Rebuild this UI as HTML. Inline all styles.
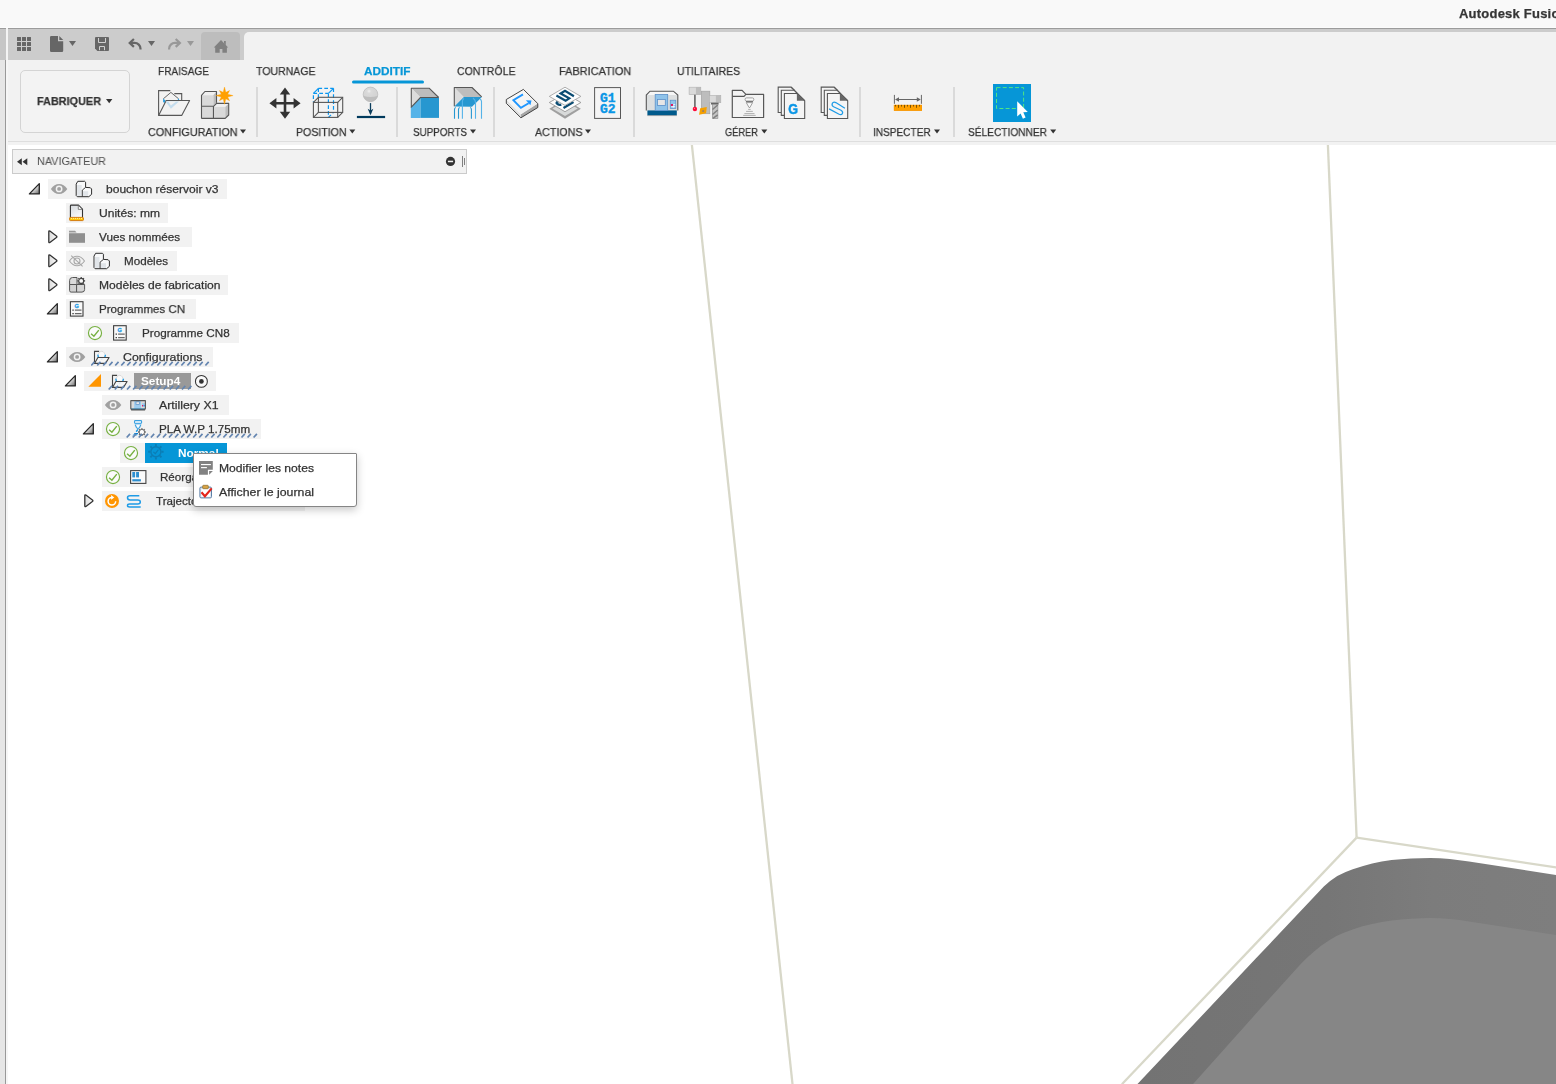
<!DOCTYPE html>
<html lang="fr"><head><meta charset="utf-8"><title>Fusion</title><style>
html,body{margin:0;padding:0}
html{overflow:hidden;width:1556px;height:1084px}
body{width:1556px;height:1084px;position:relative;overflow:hidden;background:#fff;font-family:"Liberation Sans",sans-serif;}
.a{position:absolute}
.t{position:absolute;white-space:nowrap;line-height:20px;height:20px;transform-origin:0 50%;will-change:transform;-webkit-text-stroke:0.25px currentColor;}
</style></head>
<body>
<!-- bars -->
<div class="a" style="left:0px;top:0px;width:1556px;height:27px;background:#f9f9f9;"></div>
<div class="a" style="left:0px;top:27px;width:1556px;height:1px;background:#fcfcfc;"></div>
<div class="a" style="left:0px;top:28px;width:1556px;height:1px;background:#9c9c9c;"></div>
<div class="a" style="left:0px;top:29px;width:1556px;height:31px;background:#cccccc;"></div>
<div class="a" style="left:0px;top:29px;width:6px;height:31px;background:#c6c6c6;"></div>
<div class="a" style="left:6px;top:28px;width:2px;height:32px;background:#f4f4f4;"></div>
<div class="a" style="left:0px;top:60px;width:1556px;height:85px;background:#f2f2f2;"></div>
<div class="a" style="left:8px;top:141px;width:1548px;height:1px;background:#dedede;"></div>
<div class="a" style="left:0px;top:60px;width:5px;height:1024px;background:#e6e6e6;"></div>
<div class="a" style="left:5px;top:60px;width:1px;height:1024px;background:#999999;"></div>
<div class="a" style="left:6px;top:60px;width:2px;height:1024px;background:#f6f6f6;"></div>
<span class="t" style="left:1459px;top:3.5px;font-size:13px;font-weight:700;color:#353535;transform:scaleX(1.0000);letter-spacing:0.22px;">Autodesk Fusion 360</span>
<svg class="a" style="left:17px;top:37px;" width="14" height="14" viewBox="0 0 14 14"><rect x="0" y="0" width="4" height="4" rx="0.35" fill="#666"/><rect x="5" y="0" width="4" height="4" rx="0.35" fill="#666"/><rect x="10" y="0" width="4" height="4" rx="0.35" fill="#666"/><rect x="0" y="5" width="4" height="4" rx="0.35" fill="#666"/><rect x="5" y="5" width="4" height="4" rx="0.35" fill="#666"/><rect x="10" y="5" width="4" height="4" rx="0.35" fill="#666"/><rect x="0" y="10" width="4" height="4" rx="0.35" fill="#666"/><rect x="5" y="10" width="4" height="4" rx="0.35" fill="#666"/><rect x="10" y="10" width="4" height="4" rx="0.35" fill="#666"/></svg>
<svg class="a" style="left:50px;top:36px;" width="14" height="16" viewBox="0 0 14 16"><path d="M1.2 0 H8 V5.2 H13.2 V14.8 Q13.2 16 12 16 H1.2 Q0 16 0 14.8 V1.2 Q0 0 1.2 0Z M9.3 0 L13.2 3.9 H9.3Z" fill="#666"/></svg>
<svg class="a" style="left:69px;top:41px;" width="8" height="6" viewBox="0 0 8 6"><path d="M0 0H7L3.5 5Z" fill="#666"/></svg>
<svg class="a" style="left:95px;top:37px;" width="14" height="14" viewBox="0 0 14 14"><path d="M1 0H13Q14 0 14 1V13Q14 14 13 14H2.4L0 11.6V1Q0 0 1 0Z" fill="#666"/><path d="M3.5 1 V5.5 H10.5 V1" fill="none" stroke="#d0d0d0" stroke-width="1"/><path d="M4.5 13.2 V9.5 H9.5 V13.2" fill="none" stroke="#d0d0d0" stroke-width="1"/></svg>
<svg class="a" style="left:128px;top:37px;" width="15" height="14" viewBox="0 0 15 14"><path d="M5.9 2 L1.7 5.9 L5.9 9.9" fill="none" stroke="#666" stroke-width="2.2" stroke-linejoin="miter"/><path d="M2.4 5.9 H6.6 A5.9 5.9 0 0 1 12.5 11.8 V12.6" fill="none" stroke="#666" stroke-width="2.2"/></svg>
<svg class="a" style="left:148px;top:41px;" width="8" height="6" viewBox="0 0 8 6"><path d="M0 0H7L3.5 5Z" fill="#666"/></svg>
<svg class="a" style="left:167px;top:37px;" width="15" height="14" viewBox="0 0 15 14"><g transform="translate(14.6 0) scale(-1 1)"><path d="M5.9 2 L1.7 5.9 L5.9 9.9" fill="none" stroke="#989898" stroke-width="2.2" stroke-linejoin="miter"/><path d="M2.4 5.9 H6.6 A5.9 5.9 0 0 1 12.5 11.8 V12.6" fill="none" stroke="#989898" stroke-width="2.2"/></g></svg>
<svg class="a" style="left:187px;top:41px;" width="8" height="6" viewBox="0 0 8 6"><path d="M0 0H7L3.5 5Z" fill="#999"/></svg>
<div class="a" style="left:201px;top:32px;width:39px;height:28px;background:#bdbdbd;border-radius:4px 4px 0 0;"></div>
<svg class="a" style="left:213px;top:39px;" width="16" height="15" viewBox="0 0 16 15"><path d="M8 0.9 L15.2 8.4 H13.9 V13.8 H9.4 V9.9 H6.7 V13.8 H2.2 V8.4 H0.8Z M11 2 H12.8 V6 L11 4.1Z" fill="#808080"/></svg>
<div class="a" style="left:244px;top:32px;width:1312px;height:28px;background:#f2f2f2;border-radius:5px 0 0 0;"></div>
<!-- ribbon -->
<div class="a" style="left:20px;top:70px;width:108px;height:61px;border:1px solid #d4d4d4;border-radius:5px;background:#f3f3f3"></div>
<span class="t" style="left:36.6px;top:91.3px;font-size:11.7px;font-weight:700;color:#333;transform:scaleX(0.9296);">FABRIQUER</span>
<svg class="a" style="left:106px;top:99px;" width="7" height="5" viewBox="0 0 7 5"><path d="M0 0H6.4L3.2 4.2Z" fill="#333"/></svg>
<span class="t" style="left:157.6px;top:61.4px;font-size:11.7px;font-weight:400;color:#333;transform:scaleX(0.8628);-webkit-text-stroke:0.25px #333;">FRAISAGE</span>
<span class="t" style="left:256px;top:61.4px;font-size:11.7px;font-weight:400;color:#333;transform:scaleX(0.9011);-webkit-text-stroke:0.25px #333;">TOURNAGE</span>
<span class="t" style="left:364px;top:61.4px;font-size:11.7px;font-weight:700;color:#0696d7;transform:scaleX(1.0088);">ADDITIF</span>
<span class="t" style="left:457px;top:61.4px;font-size:11.7px;font-weight:400;color:#333;transform:scaleX(0.9006);-webkit-text-stroke:0.25px #333;">CONTRÔLE</span>
<span class="t" style="left:559.4px;top:61.4px;font-size:11.7px;font-weight:400;color:#333;transform:scaleX(0.9382);-webkit-text-stroke:0.25px #333;">FABRICATION</span>
<span class="t" style="left:677.3px;top:61.4px;font-size:11.7px;font-weight:400;color:#333;transform:scaleX(0.9039);-webkit-text-stroke:0.25px #333;">UTILITAIRES</span>
<span class="t" style="left:147.5px;top:122.3px;font-size:11.7px;font-weight:400;color:#333;transform:scaleX(0.9209);-webkit-text-stroke:0.25px #333;">CONFIGURATION</span>
<svg class="a" style="left:240px;top:129px;" width="7" height="6" viewBox="0 -0.6 7 6"><path d="M0 0H6L3 4Z" fill="#333"/></svg>
<span class="t" style="left:296.2px;top:122.3px;font-size:11.7px;font-weight:400;color:#333;transform:scaleX(0.9041);-webkit-text-stroke:0.25px #333;">POSITION</span>
<svg class="a" style="left:349px;top:129px;" width="8" height="6" viewBox="-0.3 -0.6 8 6"><path d="M0 0H6L3 4Z" fill="#333"/></svg>
<span class="t" style="left:413.3px;top:122.3px;font-size:11.7px;font-weight:400;color:#333;transform:scaleX(0.8425);-webkit-text-stroke:0.25px #333;">SUPPORTS</span>
<svg class="a" style="left:470px;top:129px;" width="7" height="6" viewBox="0 -0.6 7 6"><path d="M0 0H6L3 4Z" fill="#333"/></svg>
<span class="t" style="left:534.8px;top:122.3px;font-size:11.7px;font-weight:400;color:#333;transform:scaleX(0.9143);-webkit-text-stroke:0.25px #333;">ACTIONS</span>
<svg class="a" style="left:585px;top:129px;" width="7" height="6" viewBox="0 -0.6 7 6"><path d="M0 0H6L3 4Z" fill="#333"/></svg>
<span class="t" style="left:725px;top:122.3px;font-size:11.7px;font-weight:400;color:#333;transform:scaleX(0.7937);-webkit-text-stroke:0.25px #333;">GÉRER</span>
<svg class="a" style="left:761px;top:129px;" width="8" height="6" viewBox="-0.3 -0.6 8 6"><path d="M0 0H6L3 4Z" fill="#333"/></svg>
<span class="t" style="left:873.2px;top:122.3px;font-size:11.7px;font-weight:400;color:#333;transform:scaleX(0.8611);-webkit-text-stroke:0.25px #333;">INSPECTER</span>
<svg class="a" style="left:934px;top:129px;" width="7" height="6" viewBox="0 -0.6 7 6"><path d="M0 0H6L3 4Z" fill="#333"/></svg>
<span class="t" style="left:968.3px;top:122.3px;font-size:11.7px;font-weight:400;color:#333;transform:scaleX(0.8689);-webkit-text-stroke:0.25px #333;">SÉLECTIONNER</span>
<svg class="a" style="left:1050px;top:129px;" width="8" height="6" viewBox="-0.2 -0.6 8 6"><path d="M0 0H6L3 4Z" fill="#333"/></svg>
<div class="a" style="left:256.3px;top:86.5px;width:1.4px;height:50.8px;background:#dadada;"></div>
<div class="a" style="left:396.3px;top:86.5px;width:1.4px;height:50.8px;background:#dadada;"></div>
<div class="a" style="left:493.3px;top:86.5px;width:1.4px;height:50.8px;background:#dadada;"></div>
<div class="a" style="left:633.3px;top:86.5px;width:1.4px;height:50.8px;background:#dadada;"></div>
<div class="a" style="left:859.4px;top:86.5px;width:1.4px;height:50.8px;background:#dadada;"></div>
<div class="a" style="left:953.4px;top:86.5px;width:1.4px;height:50.8px;background:#dadada;"></div>
<svg class="a" style="left:0;top:60px" width="1100" height="82" viewBox="0 60 1100 82"><rect x="352" y="80.5" width="72" height="3" rx="1.5" fill="#0696d7"/><path d="M158.6 115.4 V90.6 H170.3 M174.3 93.6 H181.7 V100.5" fill="none" stroke="#575757" stroke-width="1.1"/><path d="M163.3 98.8 L170.9 92.4 L178.6 98.8" fill="none" stroke="#575757" stroke-width="0.9"/><path d="M163.1 98.6 L165.6 100.4 L164.6 103 L163.1 102Z M177.9 98.6 L179.1 98.9 V100.3 H177.9Z" fill="#2d9fe0"/><path d="M158.6 115.4 L166.2 100.5 H189.6 L181.7 115.4 Z" fill="#f2f2f2" stroke="#575757" stroke-width="1.1" stroke-linejoin="round"/><path d="M165.6 101.4 H179 L170.9 108.8Z" fill="#c4ddee"/><path d="M168.4 101.4 H176.2 L170.9 105.4Z" fill="#f2f2f2"/><path d="M201.5 95.3 L204.9 91.5 H216.5 L213.3 95.3Z" fill="#f0f0f0"/><path d="M213.3 95.3 L216.5 91.5 V102.8 L213.3 106.3Z" fill="#bdbdbd"/><rect x="201.5" y="95.3" width="11.8" height="11" fill="#d9d9d9"/><rect x="201.5" y="106.3" width="11.8" height="12.1" fill="#d9d9d9"/><path d="M213.6 106.9 L217.1 103.4 H228.7 L225.2 106.9Z" fill="#f0f0f0"/><path d="M225.2 106.9 L228.7 103.4 V115 L225.2 118.4Z" fill="#bdbdbd"/><rect x="213.6" y="106.9" width="11.6" height="11.5" fill="#d9d9d9"/><path d="M201.5 118.4 V95.3 L204.9 91.5 H216.5 V102.8 M201.5 106.3 H213.3 M213.45 106.5 V118.4 M213.3 106.6 L216.8 103.1 M216.8 103.4 H228.7 V115 L225.2 118.4 H201.5" fill="none" stroke="#575757" stroke-width="1.1" stroke-linejoin="round"/><polygon points="224.50,87.00 225.84,92.37 229.59,90.51 227.73,94.26 233.10,95.60 227.73,96.94 229.59,100.69 225.84,98.83 224.50,104.20 223.16,98.83 219.41,100.69 221.27,96.94 215.90,95.60 221.27,94.26 219.41,90.51 223.16,92.37" fill="#ffa000" stroke="#ffa000" stroke-width="0.35" stroke-linejoin="round"/><path d="M285.0 87.60000000000001 L290.2 94.60000000000001 H286.3 V101.9 H293.6 V98.0 L300.6 103.2 L293.6 108.4 V104.5 H286.3 V111.8 H290.2 L285.0 118.8 L279.8 111.8 H283.7 V104.5 H276.4 V108.4 L269.4 103.2 L276.4 98.0 V101.9 H283.7 V94.60000000000001 H279.8Z" fill="#333"/><g fill="none" stroke="#0a96f0" stroke-width="1.2" stroke-dasharray="3.7 2.2"><path d="M318.4 88.4 H333.5"/><path d="M313.4 93.4 H328.4"/><path d="M313.4 93.4 L318.4 88.4" stroke-dasharray="none"/><path d="M328.4 93.4 L333.5 88.4" stroke-dasharray="none"/><path d="M313.4 95.2 V101.8"/><path d="M318.4 88.4 V97"/><path d="M328.4 93.4 V117.4"/><path d="M333.5 88.4 V112.4"/><path d="M328.4 117.4 L333.5 112.4"/></g><rect x="313.4" y="102.4" width="24.3" height="15" fill="none" stroke="#575757" stroke-width="1.1"/><rect x="318.4" y="97.3" width="24.3" height="15.1" fill="none" stroke="#575757" stroke-width="1.1"/><path d="M313.4 102.4 L318.4 97.3 M337.7 102.4 L342.7 97.3 M313.4 117.4 L318.4 112.4 M337.7 117.4 L342.7 112.4" stroke="#575757" stroke-width="1.1"/><defs><radialGradient id="ball" cx="0.4" cy="0.28" r="0.5"><stop offset="0" stop-color="#f0f0f0"/><stop offset="0.3" stop-color="#dadada"/><stop offset="1" stop-color="#d4d4d4"/></radialGradient><clipPath id="ballc"><circle cx="370.5" cy="94.4" r="7.3"/></clipPath></defs><circle cx="370.5" cy="94.4" r="7.3" fill="url(#ball)"/><path d="M362 95.5 Q370.5 98.5 379 95.5 V103 H362Z" fill="#bebebe" clip-path="url(#ballc)"/><circle cx="370.5" cy="94.4" r="7.3" fill="none" stroke="#b8b8b8" stroke-width="0.7"/><path d="M370.5 103.1 V113.5" stroke="#0b3d5c" stroke-width="1.3"/><path d="M367.7 108.7 L370.5 115.2 L373.3 108.7 L370.5 110.6Z" fill="#0b3d5c"/><rect x="356.9" y="115.9" width="28.2" height="2.2" fill="#003a5d"/><path d="M411.3 88.2 H429.1 L438.7 97.5 H420.5Z" fill="#bdbdbd"/><path d="M411.3 88.2 L420.5 97.5 L411.3 107.2Z" fill="#dcdcdc"/><path d="M410.8 107.6 L420.5 97.6 V117.9 H410.8Z" fill="#55b3e8"/><rect x="420.5" y="97.6" width="18.5" height="20.3" fill="#2797d0"/><path d="M438.7 97.5 L429.1 88.2 H411.3 V107.2 L420.5 97.5 H438.7" fill="none" stroke="#575757" stroke-width="1.1" stroke-linejoin="round"/><path d="M454.3 87.5 H472 L481.7 96.9 H463.6Z" fill="#bdbdbd"/><path d="M454.3 87.5 L463.6 96.9 L454.3 106.3Z" fill="#dcdcdc"/><path d="M454.3 106.5 L463.8 96.9 H481.9 L472 106.8Z" fill="#2797d0"/><path d="M481.7 96.9 L472 87.5 H454.3 V106.3" fill="none" stroke="#575757" stroke-width="1.1" stroke-linejoin="round"/><path d="M454.5 118.8 V109.6 Q454.5 108.2 455.6 107.4 M458.5 118.8 V109.6 Q458.5 108.2 459.6 107.4 M471.4 118.8 V109.6 Q471.4 108.2 470.3 107.4" fill="none" stroke="#2797d0" stroke-width="1.1"/><path d="M462.4 118.8 V101.5 Q462.4 99.6 464 98.4 M475.5 118.8 V102.5 Q475.5 100 473 98 M481.5 118.8 V101.5 Q481.5 100 480 99" fill="none" stroke="#55b3e8" stroke-width="1.1"/><defs><linearGradient id="slab" x1="0" y1="0" x2="1" y2="1"><stop offset="0" stop-color="#fcfcfc"/><stop offset="1" stop-color="#ececec"/></linearGradient></defs><path d="M506.3 99.5 V103.3 L520.9 117.8 L537.8 107.5 V103.6 L520.9 114.2Z" fill="#e2e2e2"/><path d="M520.9 114.2 V117.8 L537.8 107.5 V103.6Z" fill="#a6a6a6"/><path d="M506.3 99.5 L523.4 89.4 L537.8 103.6 L520.9 114.2Z" fill="url(#slab)"/><path d="M506.3 99.5 L523.4 89.4 L537.8 103.6 V107.5 L520.9 117.8 L506.3 103.3Z" fill="none" stroke="#333" stroke-width="0.9" stroke-linejoin="round"/><path d="M523 94.4 L513.4 100.2 L520.9 107.9 L528.6 103.2" fill="none" stroke="#1e96ff" stroke-width="1.9"/><path d="M525.9 100.3 L531.5 100.4 L530.4 105.2Z" fill="#1e96ff"/><path d="M549.3 108.7 L565 99.5 L580.9 108.7 L565 118.8Z" fill="#a0a0a0"/><path d="M552.3 108.6 L565 101.4 L577.8 108.6 L565 115.9Z" fill="#d8dada"/><path d="M549.3 102.5 L565 93.5 L580.9 102.5 L565 111.7Z" fill="#fdfdfd" stroke="#8c8c8c" stroke-width="0.8"/><path d="M558.6 101.3 Q555 102.6 557.5 104 Q559.3 105.2 561.3 104.6 M573.5 102 L563.5 108" fill="none" stroke="#0b4c73" stroke-width="2.2"/><path d="M549.3 96.4 L565 87.2 L580.9 96.4 L565 105.4Z" fill="#fdfdfd" stroke="#9a9a9a" stroke-width="0.8"/><path d="M573.9 96.2 L565 90.8 L560.6 93.5 L569.3 98.3 L565.6 100.8 L556.4 95.5" fill="none" stroke="#0b4c73" stroke-width="2.2"/><rect x="594.6" y="87.6" width="25.9" height="30.8" fill="#f5f5f5" stroke="#575757" stroke-width="1"/><text font-family="Liberation Mono" font-weight="700" font-size="13" fill="#0a96e6" stroke="#0a96e6" stroke-width="0.35"><tspan x="599.9" y="102.1">G1</tspan><tspan x="599.9" y="113.1">G2</tspan></text><path d="M646.3 110.4 V95 L650 91.2 H673.4 L677.8 95 V110.4Z" fill="#dcdfe0"/><path d="M646.8 95 L650 91.6 H673.4 L677.4 95Z" fill="#f6f6f6"/><rect x="647.4" y="110.4" width="29.4" height="5" fill="#005a8c"/><path d="M646.3 110.4 V95 L650 91.2 H673.4 L677.8 95 V110.4" fill="none" stroke="#575757" stroke-width="1.1"/><path d="M647.4 115.6 H676.8" stroke="#8a8a8a" stroke-width="0.6"/><rect x="655.2" y="94.4" width="12.5" height="16.2" fill="#8fc3ea" stroke="#5a8fc8" stroke-width="0.8"/><rect x="657.5" y="99.4" width="7.8" height="6" fill="#e6e6e6" stroke="#5a8fc8" stroke-width="0.8"/><rect x="670.2" y="100.2" width="5.6" height="8.4" fill="#8fc3ea" stroke="#5a8fc8" stroke-width="0.7"/><rect x="670.9" y="104.1" width="2.1" height="1.8" fill="#e8004d"/><path d="M673.2 104.6 H675.2 M671.2 106.7 H675.2 M673.3 105.6 V107.6" stroke="#fff" stroke-width="0.8"/><rect x="701.4" y="91.2" width="8.4" height="22.5" fill="#bdbdbd" stroke="#a2a2a2" stroke-width="0.7"/><rect x="689.1" y="87.2" width="6.7" height="7.5" fill="#dadada"/><rect x="695.8" y="87.2" width="5" height="7.5" fill="#bdbdbd"/><rect x="689.1" y="87.2" width="11.7" height="7.5" fill="none" stroke="#b0b0b0" stroke-width="0.6"/><path d="M694.9 94.7 V107" stroke="#6e6e6e" stroke-width="1.7"/><circle cx="694.9" cy="109" r="2.2" fill="#ff0a38"/><circle cx="694.5" cy="108.3" r="0.6" fill="#ff8fa3"/><rect x="709.3" y="95.4" width="6.4" height="7.3" fill="#dadada"/><rect x="715.7" y="95.4" width="5.1" height="7.3" fill="#bdbdbd"/><rect x="709.3" y="95.4" width="11.5" height="7.3" fill="none" stroke="#b0b0b0" stroke-width="0.6"/><rect x="711" y="102.7" width="7.6" height="1.8" fill="#666"/><rect x="712.3" y="104.5" width="5.6" height="14.1" fill="#c4c4c4" stroke="#8a8a8a" stroke-width="0.6"/><path d="M712.5 109.5 L717.7 105 M712.5 114.5 L717.7 110 M713 118.3 L717.7 114.8" stroke="#808080" stroke-width="1.5"/><path d="M700.2 108.3 L706.8 107.1 L706 113.3 L699.1 114.7Z" fill="#f5a000"/><rect x="702.2" y="110.1" width="1.9" height="1.9" fill="#a08060"/><path d="M732.3 117.5 V90.4 H742.1 L745.9 94.4 H763.6 V117.5Z" fill="#f3f3f3" stroke="#575757" stroke-width="1.2" stroke-linejoin="round"/><path d="M732.3 96.4 H744 L745.9 94.4" fill="none" stroke="#575757" stroke-width="1.1"/><rect x="745.1" y="97.9" width="8.7" height="3.1" rx="1.4" fill="#fafafa" stroke="#8a8a8a" stroke-width="0.8"/><path d="M746 101.7 H753" stroke="#6a6a6a" stroke-width="1.1"/><path d="M746.3 102.6 H752.6 L749.9 107.5 H749 Z" fill="#fafafa" stroke="#8a8a8a" stroke-width="0.8"/><path d="M748.2 109.4 H750.7 M746.1 111.4 H752.8 M744.4 113.6 H754.5 M743.2 115.4 H755.7" stroke="#a6a6a6" stroke-width="0.9"/><g transform="translate(0 0)"><path d="M781.3 112.5 H778.2 V87.1 H791.1 L794.5 90.4" fill="#f5f5f5" stroke="#575757" stroke-width="1.1"/><path d="M781.3 115.4 V90.2 H794.2 L797.5 93.6 V115.4Z" fill="#f5f5f5" stroke="#575757" stroke-width="1.1"/><path d="M784.4 118.5 V93.5 H796.9 L804.7 100.7 V118.5Z" fill="#f5f5f5" stroke="#575757" stroke-width="1.1"/><path d="M791.1 87.1 L804.7 100.7" stroke="#575757" stroke-width="1.1"/><path d="M796.9 93.5 L804.7 100.7 H796.9Z" fill="#666"/><text transform="translate(788.3 113.7) scale(0.84 1)" font-family="Liberation Sans" font-weight="700" font-size="15" fill="#0a96e6" stroke="#0a96e6" stroke-width="0.5">G</text></g><g transform="translate(43 0)"><path d="M781.3 112.5 H778.2 V87.1 H791.1 L794.5 90.4" fill="#f5f5f5" stroke="#575757" stroke-width="1.1"/><path d="M781.3 115.4 V90.2 H794.2 L797.5 93.6 V115.4Z" fill="#f5f5f5" stroke="#575757" stroke-width="1.1"/><path d="M784.4 118.5 V93.5 H796.9 L804.7 100.7 V118.5Z" fill="#f5f5f5" stroke="#575757" stroke-width="1.1"/><path d="M791.1 87.1 L804.7 100.7" stroke="#575757" stroke-width="1.1"/><path d="M796.9 93.5 L804.7 100.7 H796.9Z" fill="#666"/><path d="M801.9 108.2 L792.8 102.6 Q790.4 101.4 789.3 103.4 Q788.4 105.4 790.6 106.8 L798 110.3 Q800.4 111.8 799.4 113.6 Q798.2 115.4 795.6 114 L786.1 108.9" fill="none" stroke="#1e9be6" stroke-width="1.2"/></g><path d="M894.4 94.9 V103.8 M921.4 94.9 V103.8" stroke="#666" stroke-width="1"/><path d="M896 99.5 H920" stroke="#666" stroke-width="1"/><path d="M895 99.5 L899 97.2 V101.8Z M920.8 99.5 L916.8 97.2 V101.8Z" fill="#666"/><rect x="893.9" y="104.9" width="28.1" height="5.9" fill="#ffa000"/><rect x="894.2" y="105.2" width="27.5" height="5.3" fill="none" stroke="#f59300" stroke-width="0.6"/><path d="M895.5 104.9 V106.5 M898.5 104.9 V107.8 M901.5 104.9 V106.5 M904.5 104.9 V107.8 M907.5 104.9 V106.5 M910.5 104.9 V107.8 M913.5 104.9 V106.5 M916.5 104.9 V107.8 M919.5 104.9 V106.5" stroke="#7a5200" stroke-width="1"/><rect x="993" y="84" width="38" height="38" fill="#0696d7"/><rect x="996.5" y="87.6" width="27.1" height="20.9" fill="none" stroke="#4fe684" stroke-width="1" stroke-dasharray="4 2.2"/><path d="M1017.2 101.3 V116.5 L1020.6 113.4 L1022.9 118.8 L1025.6 117.6 L1023.3 112.3 L1027.8 111.9Z" fill="#fff"/></svg>
<!-- canvas -->
<div class="a" style="left:8px;top:145px;width:1548px;height:939px;background:#ffffff;"></div>
<svg class="a" style="left:0;top:0" width="1556" height="1084" viewBox="0 0 1556 1084"><defs><linearGradient id="wall" x1="1140" y1="0" x2="1556" y2="0" gradientUnits="userSpaceOnUse"><stop offset="0" stop-color="#737373"/><stop offset="0.45" stop-color="#767676"/><stop offset="0.7" stop-color="#7c7c7c"/><stop offset="1" stop-color="#7e7e7e"/></linearGradient></defs><g fill="none" stroke="#d8d8c9" stroke-width="2.3"><path d="M691.9 145 L792.5 1084"/><path d="M1327.9 145 L1356.6 837.6"/><path d="M1356.6 837.6 L1121.9 1084.2"/><path d="M1356.6 837.6 L1557 867.5"/></g><path d="M1137 1084.5 L1256 958.3 L1323.8 886.6 Q1330 880.5 1337.3 876 Q1344.5 872 1352.8 869.2 Q1362 866 1372.2 863.4 Q1381.5 861.3 1391.6 860.1 Q1401 858.9 1411 858.4 Q1420.5 858 1430.3 858 Q1440 858.2 1449.7 858.9 Q1459.5 859.9 1469 861.5 L1557 875.1 V1085 Z" fill="url(#wall)"/><path d="M1192.2 1085 L1256 1013.6 L1299.6 965.2 Q1306.5 957.8 1314.1 951.5 Q1321 945.2 1329.6 939.9 Q1336 936 1343.2 933.1 Q1352.5 929.3 1362.5 926.3 Q1372 923.8 1381.9 922.1 Q1391.5 920.5 1401.3 919.6 Q1411 918.6 1420.6 918.2 Q1430.5 918 1440 918.2 Q1450 918.8 1459.4 919.9 L1557 935.2 V1085 Z" fill="#868686"/></svg>
<!-- navigator -->
<div class="a" style="left:12px;top:149px;width:453px;height:23px;border:1px solid #cbcbcb;background:#f2f2f2"></div>
<svg class="a" style="left:17px;top:158px;" width="11" height="8" viewBox="0 0 11 8"><path d="M4.8 0.3 V7.3 L0 3.8Z M10.3 0.3 V7.3 L5.5 3.8Z" fill="#333"/></svg>
<span class="t" style="left:36.5px;top:151.1px;font-size:11.3px;font-weight:400;color:#505050;transform:scaleX(0.9615);-webkit-text-stroke:0;">NAVIGATEUR</span>
<svg class="a" style="left:445px;top:156px;" width="11" height="11" viewBox="-0.5 -0.4 11 11"><circle cx="5" cy="5" r="4.6" fill="#333"/><rect x="2.4" y="4.3" width="5.2" height="1.5" fill="#f2f2f2"/></svg>
<div class="a" style="left:462px;top:156px;width:1px;height:11px;background:#808080;"></div>
<div class="a" style="left:464px;top:158.3px;width:1px;height:6.4px;background:#808080;"></div>
<svg class="a" style="left:27px;top:181px;" width="15" height="15" viewBox="-0.4 -0.6 15 15"><defs><linearGradient id="tg29189" x1="0.2" y1="0.2" x2="1" y2="1"><stop offset="0.3" stop-color="#eeeeee"/><stop offset="1" stop-color="#666666"/></linearGradient></defs><path d="M11.9 2 V12.3 H2Z" fill="url(#tg29189)" stroke="#262626" stroke-width="1.3" stroke-linejoin="round"/></svg>
<div class="a" style="left:48px;top:179px;width:179px;height:20px;background:#f2f2f2;"></div>
<svg class="a" style="left:50px;top:183px;" width="18" height="12" viewBox="-0.7 -0.7 18 12"><path d="M0.2 5.3 Q3.6 0.2 8.4 0.2 Q13.2 0.2 16.6 5.3 Q13.2 10.4 8.4 10.4 Q3.6 10.4 0.2 5.3Z" fill="#a0a0a0"/><circle cx="8.4" cy="5.2" r="3.4" fill="#f2f2f2"/><circle cx="8.4" cy="5.2" r="1.95" fill="#a0a0a0"/></svg>
<svg class="a" style="left:75px;top:180px;" width="18" height="18" viewBox="-0.7 -0.7 18 18"><path d="M2.1 0.6 H9 L9.9 1.5 V6.7 L14.6 7 L15.9 8.3 V13.6 L13.1 16 H1.6 L0.5 14.8 V3.4 Z" fill="#f8f9fa" stroke="#2e2e2e" stroke-width="1" stroke-linejoin="round"/><path d="M1.4 4.3 H6 V15.2 H1.4Z" fill="#e1e5e9"/><path d="M7.3 10.5 H12.5 V15.2 H7.3Z" fill="#e1e5e9"/><path d="M6.6 9.4 L9.8 6.8 M6.6 9.4 V15.8" fill="none" stroke="#2e2e2e" stroke-width="0.9"/></svg>
<span class="t" style="left:105.5px;top:179px;font-size:11.6px;font-weight:400;color:#333;transform:scaleX(1.0390);">bouchon réservoir v3</span>
<div class="a" style="left:66px;top:203px;width:102px;height:20px;background:#f2f2f2;"></div>
<svg class="a" style="left:69px;top:204px;" width="16" height="18" viewBox="0 -0.5 16 18"><defs><linearGradient id="pg" x1="0" y1="0" x2="0.6" y2="1"><stop offset="0" stop-color="#d6dade"/><stop offset="1" stop-color="#f8f8f8"/></linearGradient></defs><path d="M1.4 13 V1.5 Q1.4 0.6 2.3 0.6 H9.4 L13.5 4.7 V13" fill="url(#pg)" stroke="#333" stroke-width="1.1"/><path d="M9.3 0.8 V4.9 H13.3Z" fill="#fdfdfd" stroke="#555" stroke-width="0.7"/><rect x="0.6" y="12.9" width="13.8" height="3.2" rx="0.8" fill="#ffc400" stroke="#cf6f00" stroke-width="0.9"/><path d="M2.6 13.4 V14.6 M4.6 13.4 V14.6 M6.6 13.4 V14.6 M8.6 13.4 V14.6 M10.6 13.4 V14.6 M12.5 13.4 V14.6" stroke="#fff6d8" stroke-width="0.7"/></svg>
<span class="t" style="left:98.5px;top:203px;font-size:11.6px;font-weight:400;color:#333;transform:scaleX(1.0405);">Unités: mm</span>
<svg class="a" style="left:47px;top:229px;" width="13" height="16" viewBox="-0.1 -0.4 13 16"><defs><linearGradient id="tc237" x1="0" y1="0" x2="1" y2="0"><stop offset="0" stop-color="#dcdcdc"/><stop offset="1" stop-color="#fafafa"/></linearGradient></defs><path d="M1.7 2.2 Q1.7 1.1 2.8 1.7 L9.3 6.6 Q10.3 7.4 9.3 8.2 L2.8 13.1 Q1.7 13.7 1.7 12.6Z" fill="url(#tc237)" stroke="#333" stroke-width="1.3" stroke-linejoin="round"/></svg>
<div class="a" style="left:66px;top:227px;width:126px;height:20px;background:#f2f2f2;"></div>
<svg class="a" style="left:69px;top:230px;" width="16" height="13" viewBox="0 0 16 13"><path d="M0 0.8 H6 L7.6 2.4 H0Z" fill="#9a9a9a"/><rect x="0" y="3.2" width="16" height="9.6" fill="#8f8f8f"/></svg>
<span class="t" style="left:98.5px;top:227px;font-size:11.6px;font-weight:400;color:#333;transform:scaleX(1.0122);">Vues nommées</span>
<svg class="a" style="left:47px;top:253px;" width="13" height="16" viewBox="-0.1 -0.4 13 16"><defs><linearGradient id="tc261" x1="0" y1="0" x2="1" y2="0"><stop offset="0" stop-color="#dcdcdc"/><stop offset="1" stop-color="#fafafa"/></linearGradient></defs><path d="M1.7 2.2 Q1.7 1.1 2.8 1.7 L9.3 6.6 Q10.3 7.4 9.3 8.2 L2.8 13.1 Q1.7 13.7 1.7 12.6Z" fill="url(#tc261)" stroke="#333" stroke-width="1.3" stroke-linejoin="round"/></svg>
<div class="a" style="left:66px;top:251px;width:111px;height:20px;background:#f2f2f2;"></div>
<svg class="a" style="left:69px;top:255px;" width="16" height="12" viewBox="0 0 16 12"><path d="M0.5 6 Q3.8 1.3 8 1.3 Q12.2 1.3 15.5 6 Q12.2 10.7 8 10.7 Q3.8 10.7 0.5 6Z" fill="none" stroke="#a8a8a8" stroke-width="1.1"/><circle cx="8" cy="6" r="3" fill="none" stroke="#a8a8a8" stroke-width="1.1"/><path d="M2.2 0.6 L13.6 11.4" stroke="#a8a8a8" stroke-width="1.1"/></svg>
<svg class="a" style="left:93px;top:252px;" width="18" height="18" viewBox="-0.5 -0.7 18 18"><path d="M2.1 0.6 H9 L9.9 1.5 V6.7 L14.6 7 L15.9 8.3 V13.6 L13.1 16 H1.6 L0.5 14.8 V3.4 Z" fill="#f8f9fa" stroke="#2e2e2e" stroke-width="1" stroke-linejoin="round"/><path d="M1.4 4.3 H6 V15.2 H1.4Z" fill="#e1e5e9"/><path d="M7.3 10.5 H12.5 V15.2 H7.3Z" fill="#e1e5e9"/><path d="M6.6 9.4 L9.8 6.8 M6.6 9.4 V15.8" fill="none" stroke="#2e2e2e" stroke-width="0.9"/></svg>
<span class="t" style="left:123.5px;top:251px;font-size:11.6px;font-weight:400;color:#333;transform:scaleX(1.0039);">Modèles</span>
<svg class="a" style="left:47px;top:277px;" width="13" height="16" viewBox="-0.1 -0.4 13 16"><defs><linearGradient id="tc285" x1="0" y1="0" x2="1" y2="0"><stop offset="0" stop-color="#dcdcdc"/><stop offset="1" stop-color="#fafafa"/></linearGradient></defs><path d="M1.7 2.2 Q1.7 1.1 2.8 1.7 L9.3 6.6 Q10.3 7.4 9.3 8.2 L2.8 13.1 Q1.7 13.7 1.7 12.6Z" fill="url(#tc285)" stroke="#333" stroke-width="1.3" stroke-linejoin="round"/></svg>
<div class="a" style="left:66px;top:275px;width:162px;height:20px;background:#f2f2f2;"></div>
<svg class="a" style="left:69px;top:276px;" width="17" height="18" viewBox="0 -0.5 17 18"><path d="M0.6 8 V4 Q0.6 1 3.6 1 H8 V8Z" fill="#dadada" stroke="#555" stroke-width="1"/><path d="M0.6 8 H7.6 V15.6 H2.1 Q0.6 15.6 0.6 14.1Z" fill="#d2d2d2" stroke="#555" stroke-width="1"/><path d="M7.6 15.6 H13 Q15.6 15.6 15.6 13 V8 H7.6Z" fill="#d6d6d6" stroke="#555" stroke-width="1"/><circle cx="12.2" cy="4.4" r="2.5" fill="#fafafa" stroke="#444" stroke-width="1.2"/><path d="M12.2 0.5 V1.6 M12.2 7.2 V8.3 M8.3 4.4 H9.4 M15 4.4 H16.1 M9.4 1.6 L10.2 2.4 M14.2 6.4 L15 7.2 M9.4 7.2 L10.2 6.4 M14.2 2.4 L15 1.6" stroke="#444" stroke-width="1.2"/></svg>
<span class="t" style="left:98.5px;top:275px;font-size:11.6px;font-weight:400;color:#333;transform:scaleX(1.0415);">Modèles de fabrication</span>
<svg class="a" style="left:45px;top:301px;" width="15" height="15" viewBox="-0.4 -0.6 15 15"><defs><linearGradient id="tg47309" x1="0.2" y1="0.2" x2="1" y2="1"><stop offset="0.3" stop-color="#eeeeee"/><stop offset="1" stop-color="#666666"/></linearGradient></defs><path d="M11.9 2 V12.3 H2Z" fill="url(#tg47309)" stroke="#262626" stroke-width="1.3" stroke-linejoin="round"/></svg>
<div class="a" style="left:66px;top:299px;width:130px;height:20px;background:#f2f2f2;"></div>
<svg class="a" style="left:69px;top:300px;" width="16" height="18" viewBox="-0.5 -0.8 16 18"><rect x="0.9" y="0.9" width="12.6" height="14.4" fill="#f8f8f8" stroke="#3c3c3c" stroke-width="1.1"/><text x="4.9" y="6.9" font-family="Liberation Sans" font-weight="700" font-size="5.6" fill="#1e9be6" stroke="#1e9be6" stroke-width="0.3">G</text><path d="M2.9 9.3 H4.2 M2.9 12.9 H4.2" stroke="#333" stroke-width="1.3"/><path d="M5.4 9.3 H12 M5.4 12.9 H12" stroke="#333" stroke-width="0.9"/></svg>
<span class="t" style="left:98.5px;top:299px;font-size:11.6px;font-weight:400;color:#333;transform:scaleX(0.9974);">Programmes CN</span>
<div class="a" style="left:84px;top:323px;width:155px;height:20px;background:#f2f2f2;"></div>
<svg class="a" style="left:87px;top:325px;" width="16" height="16" viewBox="-0.5 -0.5 16 16"><circle cx="7.5" cy="7.5" r="6.55" fill="#fbfbfb" stroke="#76b041" stroke-width="1.15"/><path d="M3.6 8.3 L6.4 10.8 L11.3 4.6" fill="none" stroke="#76b041" stroke-width="1.45"/></svg>
<svg class="a" style="left:112px;top:324px;" width="16" height="18" viewBox="-0.7 -0.8 16 18"><rect x="0.9" y="0.9" width="12.6" height="14.4" fill="#f8f8f8" stroke="#3c3c3c" stroke-width="1.1"/><text x="4.9" y="6.9" font-family="Liberation Sans" font-weight="700" font-size="5.6" fill="#1e9be6" stroke="#1e9be6" stroke-width="0.3">G</text><path d="M2.9 9.3 H4.2 M2.9 12.9 H4.2" stroke="#333" stroke-width="1.3"/><path d="M5.4 9.3 H12 M5.4 12.9 H12" stroke="#333" stroke-width="0.9"/></svg>
<span class="t" style="left:141.5px;top:323px;font-size:11.6px;font-weight:400;color:#333;transform:scaleX(1.0082);">Programme CN8</span>
<svg class="a" style="left:45px;top:349px;" width="15" height="15" viewBox="-0.4 -0.6 15 15"><defs><linearGradient id="tg47357" x1="0.2" y1="0.2" x2="1" y2="1"><stop offset="0.3" stop-color="#eeeeee"/><stop offset="1" stop-color="#666666"/></linearGradient></defs><path d="M11.9 2 V12.3 H2Z" fill="url(#tg47357)" stroke="#262626" stroke-width="1.3" stroke-linejoin="round"/></svg>
<div class="a" style="left:66px;top:347px;width:147px;height:20px;background:#f2f2f2;"></div>
<svg class="a" style="left:68px;top:351px;" width="18" height="12" viewBox="-0.7 -0.7 18 12"><path d="M0.2 5.3 Q3.6 0.2 8.4 0.2 Q13.2 0.2 16.6 5.3 Q13.2 10.4 8.4 10.4 Q3.6 10.4 0.2 5.3Z" fill="#a0a0a0"/><circle cx="8.4" cy="5.2" r="3.4" fill="#f2f2f2"/><circle cx="8.4" cy="5.2" r="1.95" fill="#a0a0a0"/></svg>
<svg class="a" style="left:93px;top:350px;" width="18" height="15" viewBox="-0.5 -0.5 18 15"><path d="M1 12.8 V0.9 H5.6" fill="none" stroke="#444" stroke-width="1.1"/><path d="M4.2 6.8 Q4.6 1 8.2 0.8 Q11.6 1 12 6.8Z" fill="#fbfbfb" stroke="#c8c8c8" stroke-width="0.6"/><path d="M4.3 4.2 L4.9 6.6 M12 4.2 L11.3 6.6" stroke="#1e9be6" stroke-width="1.3"/><path d="M1 12.9 L4.4 7 H15.6 L12 12.9Z" fill="#f6f6f6" stroke="#444" stroke-width="1.1" stroke-linejoin="round"/><path d="M6.5 8 H10 L8.2 9.4Z" fill="#d4e6f3"/></svg>
<span class="t" style="left:123.1px;top:347px;font-size:11.6px;font-weight:400;color:#333;transform:scaleX(1.0633);">Configurations</span>
<svg class="a" style="left:91px;top:361px;" width="119" height="6" viewBox="0 0 119 6"><path d="M0.20 4.5 L3.50 0.9 M6.21 4.5 L9.51 0.9 M12.22 4.5 L15.52 0.9 M18.23 4.5 L21.53 0.9 M24.24 4.5 L27.54 0.9 M30.25 4.5 L33.55 0.9 M36.26 4.5 L39.56 0.9 M42.27 4.5 L45.57 0.9 M48.28 4.5 L51.58 0.9 M54.29 4.5 L57.59 0.9 M60.31 4.5 L63.61 0.9 M66.32 4.5 L69.62 0.9 M72.33 4.5 L75.63 0.9 M78.34 4.5 L81.64 0.9 M84.35 4.5 L87.65 0.9 M90.36 4.5 L93.66 0.9 M96.37 4.5 L99.67 0.9 M102.38 4.5 L105.68 0.9 M108.39 4.5 L111.69 0.9 M114.40 4.5 L117.70 0.9 " stroke="#6485b0" stroke-width="1.7" fill="none"/></svg>
<svg class="a" style="left:63px;top:373px;" width="15" height="15" viewBox="-0.4 -0.6 15 15"><defs><linearGradient id="tg65381" x1="0.2" y1="0.2" x2="1" y2="1"><stop offset="0.3" stop-color="#eeeeee"/><stop offset="1" stop-color="#666666"/></linearGradient></defs><path d="M11.9 2 V12.3 H2Z" fill="url(#tg65381)" stroke="#262626" stroke-width="1.3" stroke-linejoin="round"/></svg>
<div class="a" style="left:84px;top:371px;width:132px;height:20px;background:#f2f2f2;"></div>
<svg class="a" style="left:88px;top:373px;" width="14" height="15" viewBox="0 -0.7 14 15"><path d="M13 0.4 V13 H0.3Z" fill="#ff9500"/></svg>
<svg class="a" style="left:111px;top:374px;" width="18" height="15" viewBox="-0.5 -0.5 18 15"><path d="M1 12.8 V0.9 H5.6" fill="none" stroke="#444" stroke-width="1.1"/><path d="M4.2 6.8 Q4.6 1 8.2 0.8 Q11.6 1 12 6.8Z" fill="#fbfbfb" stroke="#c8c8c8" stroke-width="0.6"/><path d="M4.3 4.2 L4.9 6.6 M12 4.2 L11.3 6.6" stroke="#1e9be6" stroke-width="1.3"/><path d="M1 12.9 L4.4 7 H15.6 L12 12.9Z" fill="#f6f6f6" stroke="#444" stroke-width="1.1" stroke-linejoin="round"/><path d="M6.5 8 H10 L8.2 9.4Z" fill="#d4e6f3"/></svg>
<div class="a" style="left:134px;top:373px;width:56.8px;height:15.8px;background:#999999;"></div>
<span class="t" style="left:141px;top:371px;font-size:11.6px;font-weight:700;color:#fff;transform:scaleX(1.0167);-webkit-text-stroke:0;">Setup4</span>
<svg class="a" style="left:108px;top:385px;" width="84" height="6" viewBox="-0.5 0 84 6"><path d="M0.20 4.5 L3.50 0.9 M6.31 4.5 L9.61 0.9 M12.42 4.5 L15.72 0.9 M18.52 4.5 L21.82 0.9 M24.63 4.5 L27.93 0.9 M30.74 4.5 L34.04 0.9 M36.85 4.5 L40.15 0.9 M42.95 4.5 L46.25 0.9 M49.06 4.5 L52.36 0.9 M55.17 4.5 L58.47 0.9 M61.28 4.5 L64.58 0.9 M67.38 4.5 L70.68 0.9 M73.49 4.5 L76.79 0.9 M79.60 4.5 L82.90 0.9 " stroke="#6485b0" stroke-width="1.7" fill="none"/></svg>
<svg class="a" style="left:194px;top:374px;" width="15" height="15" viewBox="-0.4 -0.4 15 15"><circle cx="7" cy="7" r="5.95" fill="#fafafa" stroke="#333" stroke-width="1.05"/><circle cx="7" cy="7" r="2.35" fill="#333"/></svg>
<div class="a" style="left:102px;top:395px;width:127px;height:20px;background:#f2f2f2;"></div>
<svg class="a" style="left:104px;top:399px;" width="18" height="12" viewBox="-0.7 -0.7 18 12"><path d="M0.2 5.3 Q3.6 0.2 8.4 0.2 Q13.2 0.2 16.6 5.3 Q13.2 10.4 8.4 10.4 Q3.6 10.4 0.2 5.3Z" fill="#a0a0a0"/><circle cx="8.4" cy="5.2" r="3.4" fill="#f2f2f2"/><circle cx="8.4" cy="5.2" r="1.95" fill="#a0a0a0"/></svg>
<svg class="a" style="left:130px;top:399px;" width="17" height="13" viewBox="0 -0.5 17 13"><path d="M0.8 9 V1.15 H15.4 V9 L14.6 10.35 H1.6Z" fill="#dadada"/><rect x="4.2" y="1.5" width="6.8" height="7.5" fill="#9ccbee"/><rect x="6" y="2.3" width="3.6" height="2.7" fill="#e6e6e6" stroke="#5a90c8" stroke-width="0.7"/><rect x="12.1" y="3.7" width="2.9" height="3.6" fill="#9ccbee"/><circle cx="12.7" cy="6.2" r="0.75" fill="#e8004d"/><circle cx="14.3" cy="6.2" r="0.65" fill="#1e9be6"/><path d="M1 9 H15.2 L14.5 10.3 H1.7Z" fill="#005a8c"/><path d="M0.8 9 V1.15 H15.4 V9 L14.6 10.35 H1.6Z" fill="none" stroke="#555" stroke-width="1.1" stroke-linejoin="round"/></svg>
<span class="t" style="left:159.1px;top:395px;font-size:11.6px;font-weight:400;color:#333;transform:scaleX(1.0613);">Artillery X1</span>
<svg class="a" style="left:81px;top:421px;" width="15" height="15" viewBox="-0.4 -0.6 15 15"><defs><linearGradient id="tg83429" x1="0.2" y1="0.2" x2="1" y2="1"><stop offset="0.3" stop-color="#eeeeee"/><stop offset="1" stop-color="#666666"/></linearGradient></defs><path d="M11.9 2 V12.3 H2Z" fill="url(#tg83429)" stroke="#262626" stroke-width="1.3" stroke-linejoin="round"/></svg>
<div class="a" style="left:102px;top:419px;width:159px;height:20px;background:#f2f2f2;"></div>
<svg class="a" style="left:105px;top:421px;" width="16" height="16" viewBox="-0.5 -0.5 16 16"><circle cx="7.5" cy="7.5" r="6.55" fill="#fbfbfb" stroke="#76b041" stroke-width="1.15"/><path d="M3.6 8.3 L6.4 10.8 L11.3 4.6" fill="none" stroke="#76b041" stroke-width="1.45"/></svg>
<svg class="a" style="left:131px;top:419px;" width="17" height="19" viewBox="0 -0.5 17 19"><rect x="3.5" y="1.1" width="7.1" height="2.8" rx="0.9" fill="#fff" stroke="#3aa0e0" stroke-width="1.1"/><rect x="3.8" y="4.2" width="6.5" height="1" fill="#7fc4ee"/><path d="M4.2 5.3 L5.5 8.1 Q7 9.5 8.5 8.1 L9.8 5.3" fill="#f8fbfe" stroke="#3aa0e0" stroke-width="1.1"/><path d="M6.7 10.2 L5.5 11.7" stroke="#1e9be6" stroke-width="1.4" stroke-linecap="round"/><path d="M1.2 16.1 L4 13.6 H7.2 L6 16.1Z" fill="#52aee6"/><path d="M3.4 14 H7" stroke="#0b7fd0" stroke-width="1"/><path d="M10.9 8.7 V10 M10.9 15.2 V16.5 M7 12.6 H8.3 M13.5 12.6 H14.8 M8.1 9.8 L9 10.7 M12.8 14.5 L13.7 15.4 M8.1 15.4 L9 14.5 M12.8 10.7 L13.7 9.8" stroke="#6a6a6a" stroke-width="1.5"/><circle cx="10.9" cy="12.6" r="2.7" fill="#fdfdfd" stroke="#6a6a6a" stroke-width="1"/></svg>
<span class="t" style="left:159.1px;top:419px;font-size:11.6px;font-weight:400;color:#333;transform:scaleX(1.0049);">PLA W.P 1.75mm</span>
<svg class="a" style="left:126px;top:433px;" width="132" height="6" viewBox="-0.5 0 132 6"><path d="M0.20 4.5 L3.50 0.9 M6.24 4.5 L9.54 0.9 M12.29 4.5 L15.59 0.9 M18.33 4.5 L21.63 0.9 M24.37 4.5 L27.67 0.9 M30.41 4.5 L33.71 0.9 M36.46 4.5 L39.76 0.9 M42.50 4.5 L45.80 0.9 M48.54 4.5 L51.84 0.9 M54.59 4.5 L57.89 0.9 M60.63 4.5 L63.93 0.9 M66.67 4.5 L69.97 0.9 M72.71 4.5 L76.01 0.9 M78.76 4.5 L82.06 0.9 M84.80 4.5 L88.10 0.9 M90.84 4.5 L94.14 0.9 M96.89 4.5 L100.19 0.9 M102.93 4.5 L106.23 0.9 M108.97 4.5 L112.27 0.9 M115.01 4.5 L118.31 0.9 M121.06 4.5 L124.36 0.9 M127.10 4.5 L130.40 0.9 " stroke="#6485b0" stroke-width="1.7" fill="none"/></svg>
<div class="a" style="left:120px;top:443px;width:25px;height:20px;background:#f2f2f2;"></div>
<div class="a" style="left:145px;top:443px;width:82px;height:20px;background:#0696d7;"></div>
<svg class="a" style="left:123px;top:445px;" width="16" height="16" viewBox="-0.5 -0.5 16 16"><circle cx="7.5" cy="7.5" r="6.55" fill="#fbfbfb" stroke="#76b041" stroke-width="1.15"/><path d="M3.6 8.3 L6.4 10.8 L11.3 4.6" fill="none" stroke="#76b041" stroke-width="1.45"/></svg>
<svg class="a" style="left:147px;top:443px;" width="18" height="18" viewBox="-0.4 -0.3 18 18"><circle cx="8.5" cy="8.5" r="5" fill="none" stroke="#0b7db5" stroke-width="1.4"/><path d="M8.5 0.8 V3 M8.5 14 V16.2 M0.8 8.5 H3 M14 8.5 H16.2 M3 3 L4.6 4.6 M12.4 12.4 L14 14 M3 14 L4.6 12.4 M12.4 4.6 L14 3" stroke="#0b7db5" stroke-width="1.9"/><path d="M6 8.6 L7.9 10.4 L11 6.4" fill="none" stroke="#0b7db5" stroke-width="1.2"/></svg>
<span class="t" style="left:177.7px;top:443px;font-size:11.6px;font-weight:700;color:#fff;transform:scaleX(1.0187);-webkit-text-stroke:0;">Normal</span>
<div class="a" style="left:102px;top:467px;width:198px;height:20px;background:#f2f2f2;"></div>
<svg class="a" style="left:105px;top:469px;" width="16" height="16" viewBox="-0.5 -0.5 16 16"><circle cx="7.5" cy="7.5" r="6.55" fill="#fbfbfb" stroke="#76b041" stroke-width="1.15"/><path d="M3.6 8.3 L6.4 10.8 L11.3 4.6" fill="none" stroke="#76b041" stroke-width="1.45"/></svg>
<svg class="a" style="left:130px;top:470px;" width="17" height="14" viewBox="0 0 17 14"><rect x="0.6" y="0.6" width="15.3" height="12.8" fill="#fafafa" stroke="#444" stroke-width="1.1"/><rect x="2.3" y="2" width="2.8" height="5.4" fill="#2e8fd0"/><rect x="6.1" y="2" width="2.9" height="5.4" fill="#2e8fd0"/><rect x="2.3" y="9.2" width="8.6" height="2.2" fill="#2e8fd0"/></svg>
<span class="t" style="left:159.6px;top:467px;font-size:11.6px;font-weight:400;color:#333;transform:scaleX(1.0000);">Réorganisation</span>
<svg class="a" style="left:83px;top:493px;" width="13" height="16" viewBox="-0.1 -0.4 13 16"><defs><linearGradient id="tc501" x1="0" y1="0" x2="1" y2="0"><stop offset="0" stop-color="#dcdcdc"/><stop offset="1" stop-color="#fafafa"/></linearGradient></defs><path d="M1.7 2.2 Q1.7 1.1 2.8 1.7 L9.3 6.6 Q10.3 7.4 9.3 8.2 L2.8 13.1 Q1.7 13.7 1.7 12.6Z" fill="url(#tc501)" stroke="#333" stroke-width="1.3" stroke-linejoin="round"/></svg>
<div class="a" style="left:102px;top:491px;width:203px;height:20px;background:#f2f2f2;"></div>
<svg class="a" style="left:104px;top:493px;" width="16" height="16" viewBox="-0.5 -0.5 16 16"><circle cx="7.5" cy="7.5" r="7" fill="#ff9500"/><path d="M11.2 7.8 A3.8 3.8 0 1 1 7.4 3.9" fill="none" stroke="#fff" stroke-width="1.5"/><path d="M6.6 1.6 L9.8 4 L6.6 6.3Z" fill="#fff"/></svg>
<svg class="a" style="left:126px;top:494px;" width="17" height="15" viewBox="-0.5 -0.7 17 15"><path d="M12.8 1 H3.6 Q1 1 1 3.1 Q1 5.3 3.6 5.3 H11.2 Q13.8 5.3 13.8 7.3 Q13.8 9.3 11.2 9.3 H3.2 Q1 9.3 1 10.7 Q1 12.2 3.2 12.2 H14.2" fill="none" stroke="#1e9be6" stroke-width="1.5"/></svg>
<span class="t" style="left:155.8px;top:491px;font-size:11.6px;font-weight:400;color:#333;transform:scaleX(1.0000);">Trajectoires</span>
<!-- context menu -->
<div class="a" style="left:193px;top:453px;width:162px;height:52px;border:1px solid #858585;border-radius:1px 1px 3px 3px;background:#fff;box-shadow:0 3px 9px rgba(0,0,0,0.22)"></div>
<svg class="a" style="left:199px;top:461px;" width="14" height="15" viewBox="0 -0.1 14 15"><path d="M0 0 H13.8 V8.7 H8.9 V13.7 H0Z" fill="#828282"/><path d="M10.1 10 H13.9 L10.1 13.7Z" fill="#828282"/><rect x="2" y="2.9" width="9.9" height="1.15" fill="#fff"/><rect x="2" y="5.95" width="5.9" height="1.15" fill="#fff"/></svg>
<span class="t" style="left:218.5px;top:458px;font-size:11.6px;font-weight:400;color:#333;transform:scaleX(1.0456);">Modifier les notes</span>
<svg class="a" style="left:198px;top:484px;" width="16" height="16" viewBox="-0.5 -0.5 16 16"><rect x="1.4" y="2.6" width="11.6" height="10.8" rx="1.2" fill="#dfe7f0" stroke="#5b7fa6" stroke-width="1"/><rect x="2.9" y="4.6" width="8.6" height="7.6" fill="#fff"/><rect x="4.2" y="0.8" width="5.6" height="3.4" rx="0.8" fill="#d8a446" stroke="#8a6a2a" stroke-width="0.7"/><path d="M3 7.8 L6.4 11.8 L13.2 3.9" fill="none" stroke="#e3241b" stroke-width="2.1"/></svg>
<span class="t" style="left:218.5px;top:482px;font-size:11.6px;font-weight:400;color:#333;transform:scaleX(1.0629);">Afficher le journal</span>
</body></html>
